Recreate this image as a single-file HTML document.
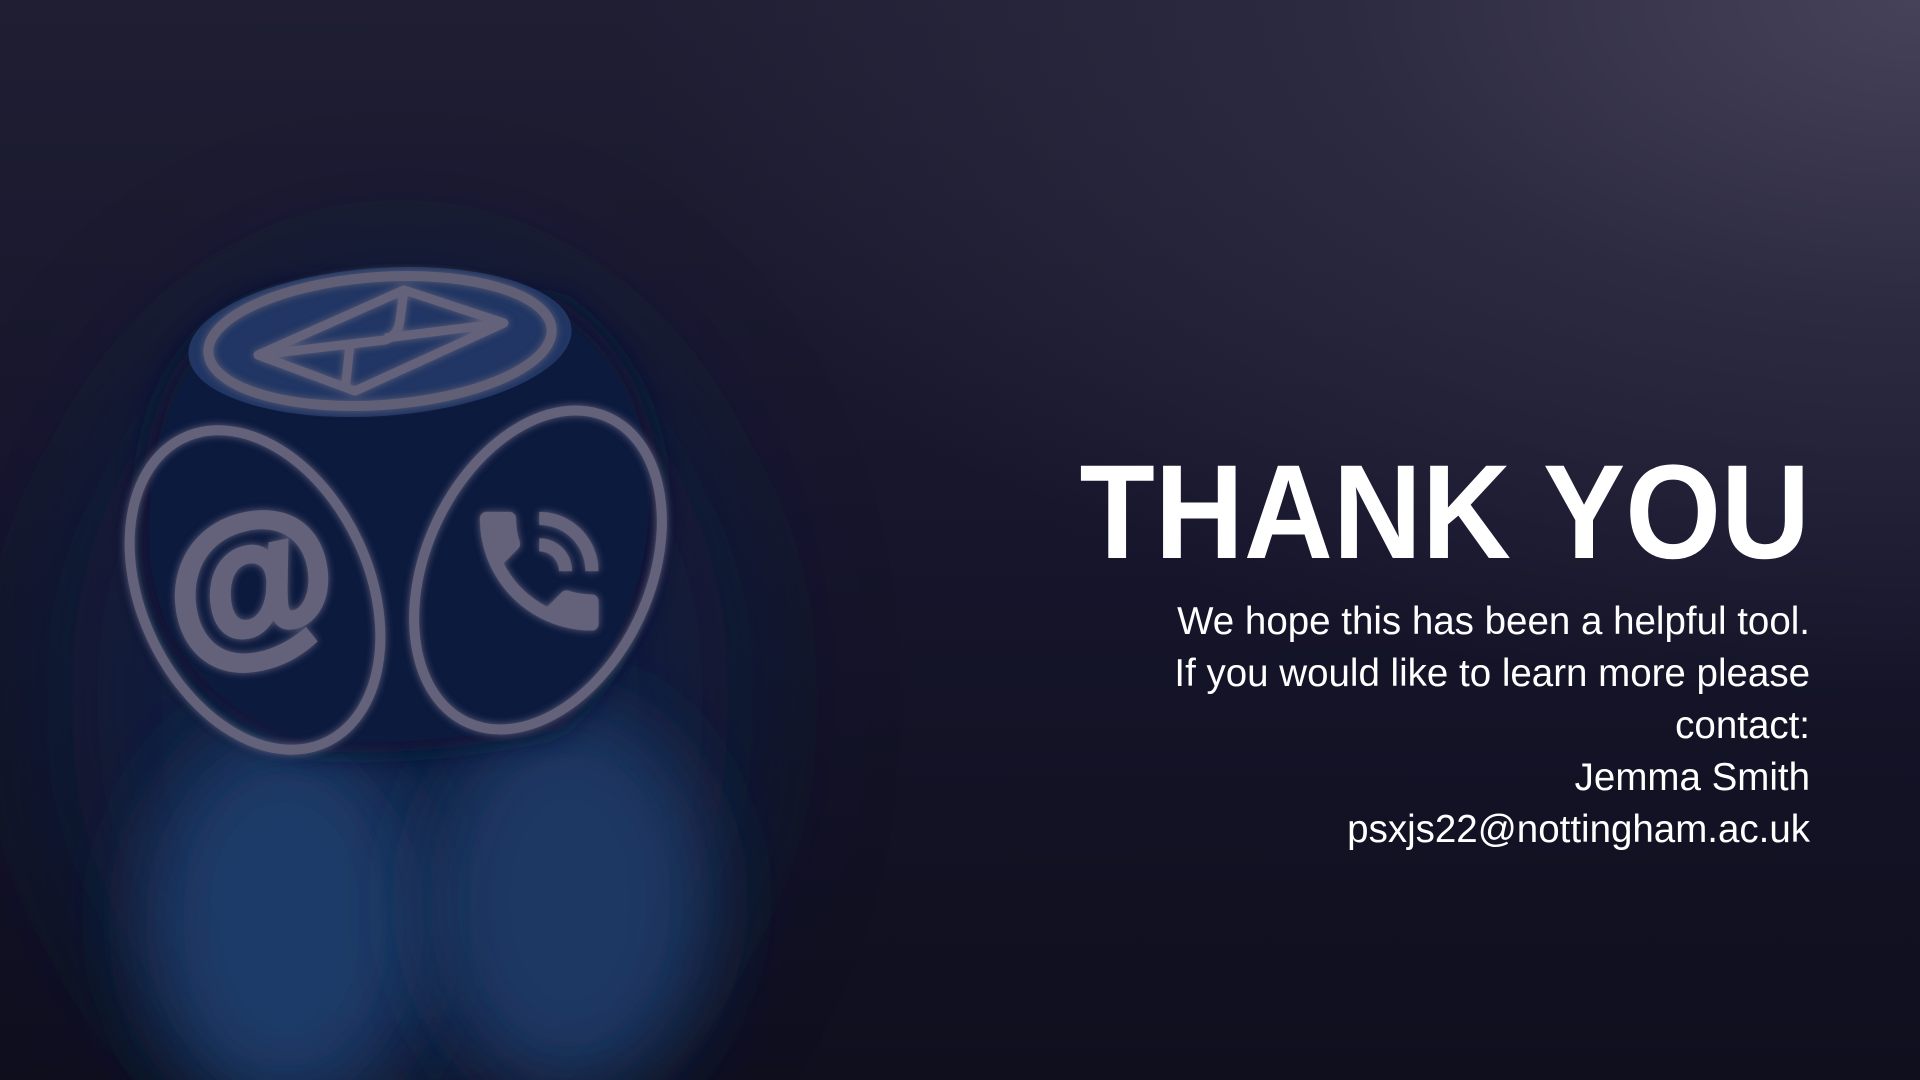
<!DOCTYPE html>
<html><head><meta charset="utf-8"><style>
html,body{margin:0;padding:0}
body{width:1920px;height:1080px;overflow:hidden;position:relative;
background:
radial-gradient(ellipse 1300px 700px at 1920px 0px,#46425a 0%,#2c2a40 45%,rgba(20,19,36,0) 100%),
linear-gradient(180deg,#1f1e33 0%,#16152b 50%,#0f0f1e 100%);
font-family:"Liberation Sans",sans-serif;color:#fff}
svg{position:absolute;left:0;top:0}
.title{position:absolute;right:110px;top:438px;font-size:134px;font-weight:bold;line-height:150px;transform:scaleX(0.92);transform-origin:right;white-space:nowrap}
.body{position:absolute;right:110px;top:596px;font-size:38.5px;line-height:52px;text-align:right;white-space:nowrap}
</style></head><body>
<svg width="1920" height="1080" viewBox="0 0 1920 1080">
<defs>
<filter id="b40" x="-100%" y="-100%" width="300%" height="300%"><feGaussianBlur stdDeviation="40"/></filter>
<filter id="b80" x="-100%" y="-100%" width="300%" height="300%"><feGaussianBlur stdDeviation="80"/></filter>
<filter id="b15" x="-50%" y="-50%" width="200%" height="200%"><feGaussianBlur stdDeviation="15"/></filter>
<filter id="glow" x="-30%" y="-30%" width="160%" height="160%"><feGaussianBlur stdDeviation="4" result="g"/><feMerge><feMergeNode in="g"/><feMergeNode in="SourceGraphic"/></feMerge></filter>
</defs>
<ellipse cx="400" cy="700" rx="330" ry="420" fill="#112048" opacity="0.7" filter="url(#b80)"/>
<ellipse cx="285" cy="920" rx="140" ry="190" fill="#1c3a68" filter="url(#b40)"/>
<ellipse cx="570" cy="900" rx="140" ry="190" fill="#1a3764" filter="url(#b40)"/>
<path d="M160 400 Q200 300 300 290 L560 300 Q650 360 660 480 Q660 640 560 730 Q420 760 300 750 Q160 700 140 560 Q135 470 160 400Z" fill="#0a1636" filter="url(#b15)"/>
<path d="M170 410 Q210 310 310 300 L550 310 Q640 370 650 480 Q650 630 555 720 Q420 750 300 740 Q170 690 150 560 Q145 470 170 410Z" fill="#0c1a3e"/>
<ellipse cx="380" cy="342" rx="192" ry="74" transform="rotate(-4 380 342)" fill="#233a68" opacity="0.9"/>
<g filter="url(#glow)" fill="none" stroke="#64627a" stroke-width="9" stroke-linejoin="round">
<ellipse cx="380" cy="341" rx="172" ry="64" transform="rotate(-4 380 341)" stroke="#605e76" stroke-width="10"/>
<path d="M258 355 L404 290 L504 323 L355 391 Z"/>
<path d="M404 290 L400 320 Q398 336 385 340 L258 355"/>
<path d="M350 345 L345 390"/>
<path d="M385 338 L504 323"/>
<ellipse cx="255" cy="590" rx="114" ry="168" transform="rotate(-25 255 590)" stroke-width="10"/>
<ellipse cx="538" cy="570" rx="112" ry="168" transform="rotate(25 538 570)" stroke-width="10"/>
</g>
<g filter="url(#glow)" fill="#64627a">
<text x="252" y="640" font-size="175" font-weight="bold" text-anchor="middle" transform="rotate(-12 252 590)" font-family="Liberation Sans,sans-serif" stroke="#64627a" stroke-width="7">@</text>
<g transform="translate(460 492) scale(6.6)"><path d="M6.62 10.79c1.44 2.830 3.76 5.14 6.59 6.59l2.2-2.2c.27-.27.67-.36 1.02-.24 1.12.37 2.33.57 3.57.57.55 0 1 .45 1 1V20c0 .55-.45 1-1 1-9.39 0-17-7.61-17-17 0-.55.45-1 1-1h3.5c.55 0 1 .45 1 1 0 1.25.2 2.45.57 3.57.11.35.03.74-.25 1.020l-2.2 2.2z"/><path d="M19 12h2c0-4.97-4.03-9-9-9v2c3.87 0 7 3.13 7 7zm-4 0h2c0-2.76-2.24-5-5-5v2c1.66 0 3 1.34 3 3z"/></g>
</g>
</svg>
<div class="title">THANK YOU</div>
<div class="body">We hope this has been a helpful tool.<br>If you would like to learn more please<br>contact:<br>Jemma Smith<br>psxjs22@nottingham.ac.uk</div>
</body></html>
